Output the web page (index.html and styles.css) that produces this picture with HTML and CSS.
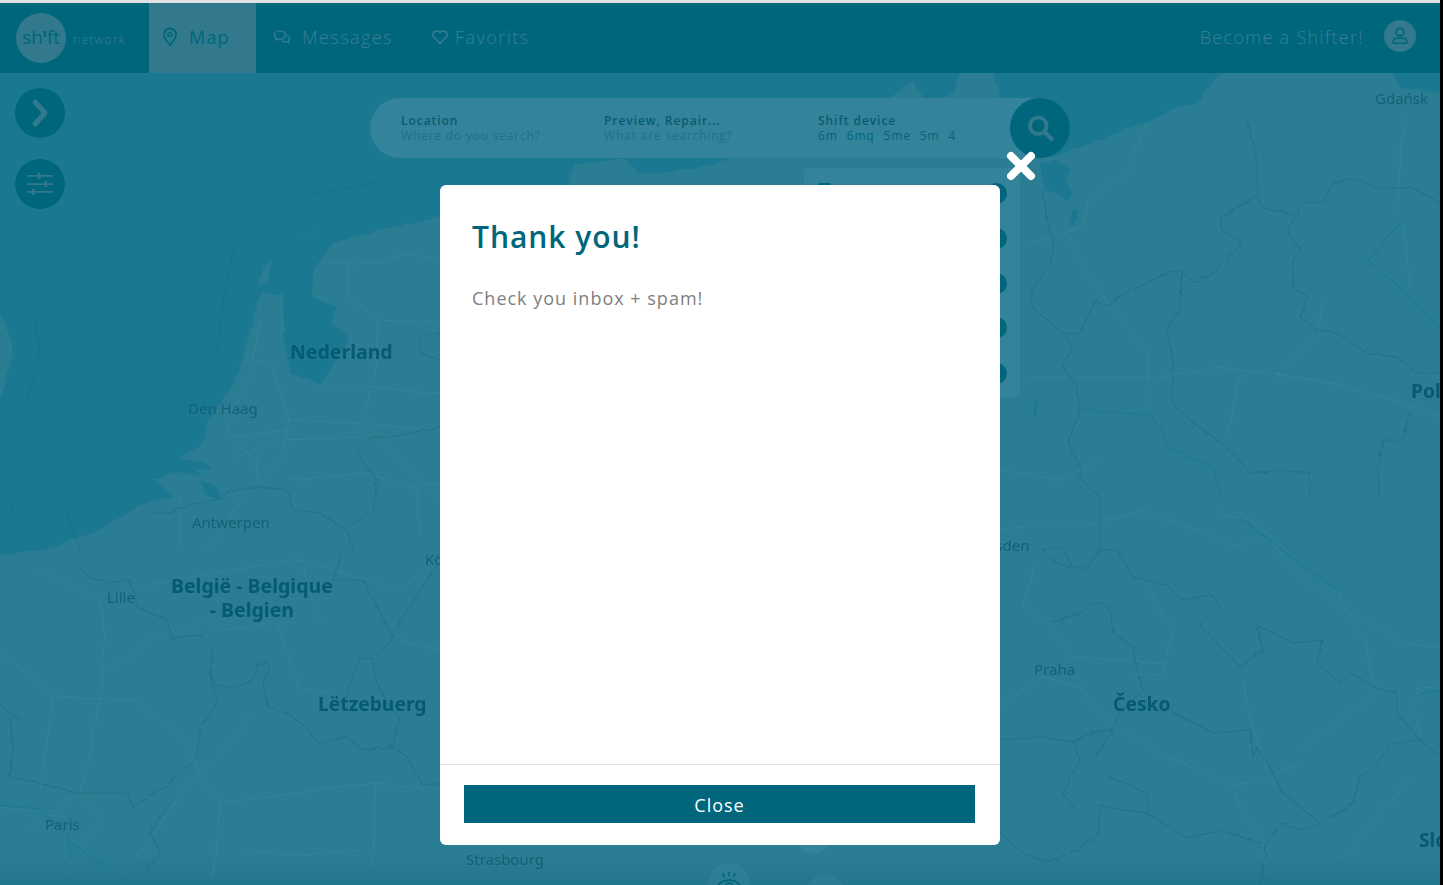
FILE: index.html
```html
<!DOCTYPE html>
<html lang="en">
<head>
<meta charset="utf-8">
<title>Shift network</title>
<link rel="stylesheet" href="styles.css">
</head>
<body>
<div class="app">
  <header class="nav">
    <div class="brand">
      <span class="logo">sh<i class="logo-i">ꞌ</i>ft</span>
      <span class="brand-sub">network</span>
    </div>
    <a class="nav-item item-map">
      <svg class="nav-icon" viewBox="0 0 16 20" width="16" height="20"><path d="M8 1.500a6 6 0 0 0-6 6c0 4 6 10.500 6 10.500s6-6.500 6-10.500a6 6 0 0 0-6-6z" fill="none" stroke="currentColor" stroke-width="1.800"/><circle cx="8" cy="7.500" r="2" fill="none" stroke="currentColor" stroke-width="1.600"/></svg>
      Map
    </a>
    <a class="nav-item item-messages">
      <svg class="nav-icon" viewBox="0 0 18 16" width="18" height="16"><path d="M7 2c-3 0-5.500 1.700-5.500 4 0 1.200.7 2.200 1.700 3L2.500 11l2.500-1c.6.200 1.300.300 2 .300 3 0 5.500-1.800 5.500-4.300S10 2 7 2z" fill="none" stroke="currentColor" stroke-width="1.200"/><path d="M14 6.500c1.500.6 2.500 1.800 2.500 3 0 .9-.4 1.600-1.100 2.200l.6 2-2.300-1c-1.700.5-3.700 0-4.700-1.200" fill="none" stroke="currentColor" stroke-width="1.200"/></svg>
      Messages
    </a>
    <a class="nav-item item-favorits">
      <svg class="nav-icon" viewBox="0 0 18 16" width="18" height="16"><path d="M9 14.500 2.500 8A4 4 0 0 1 8 2.500l1 1 1-1A4 4 0 0 1 15.500 8z" fill="none" stroke="currentColor" stroke-width="1.400" stroke-linejoin="round"/></svg>
      Favorits
    </a>
    <div class="nav-right">
      <a class="become">Become a Shifter!</a>
      <span class="avatar">
        <svg viewBox="0 0 18 18" width="20" height="20"><circle cx="9" cy="5.500" r="3.500" fill="none" stroke="#00667c" stroke-width="1.500"/><path d="M3 15.500v-1.500c0-2 1.500-3 3.500-3h5c2 0 3.500 1 3.500 3v1.500z" fill="none" stroke="#00667c" stroke-width="1.500" stroke-linejoin="round"/></svg>
      </span>
    </div>
  </header>

  <main class="map">
    <svg class="map-art" viewBox="0 0 1440 812" preserveAspectRatio="none">
      <defs>
        <filter id="wiggle" filterUnits="userSpaceOnUse" x="-20" y="50" width="1500" height="860">
          <feTurbulence type="fractalNoise" baseFrequency="0.16" numOctaves="2" seed="4"/>
          <feDisplacementMap in="SourceGraphic" scale="4"/>
        </filter>
        <filter id="soft" filterUnits="userSpaceOnUse" x="-20" y="50" width="1500" height="860">
          <feTurbulence type="fractalNoise" baseFrequency="0.05" numOctaves="2" seed="9"/>
          <feDisplacementMap in="SourceGraphic" scale="4"/>
        </filter>
      </defs>
      <g transform="translate(0,-73)">
        <g filter="url(#soft)">
          <path class="land" d="M-20 556 L43 550 L100 530 L143 503 L175 497 L156 482 L172 472 L205 478 L178 458 L200 448 L207 425 L225 395 L240 370 L250 330 L257 300 L264 293 L283 295 L283 337 L290 373 L320 384 L350 338 L330 322 L337 307 L312 297 L313 270 L333 243 L377 230 L420 222 L445 215 L500 205 L565 195 L575 165 L625 158 L640 175 L690 170 L760 150 L800 125 L880 110 L890 98 L913 80 L925 100 L953 95 L960 70 L993 70 L1000 95 L990 110 L1000 150 L1053 157 L1100 140 L1150 120 L1200 100 L1222 70 L1392 70 L1400 88 L1460 95 L1460 905 L-20 905 Z"/>
          <path class="water" d="M1040 163 L1056 160 L1072 170 L1066 182 L1072 192 L1068 202 L1056 192 L1044 190Z"/>
          <path class="water" d="M1072 210 L1078 210 L1076 226 L1071 226Z"/>
          <path class="water" d="M1035 400 L1038 400 L1037 416 L1034 416Z"/>
          <path class="land" d="M-20 312 L2 315 L12 345 L13 358 L8 375 L2 395 L-20 405Z"/>
          <path class="land" d="M258 282 L265 265 L272 258 L268 280 L262 288Z"/>
          <path class="land" d="M295 243 L312 232 L325 226 L300 240Z"/>
          <path class="land" d="M153 480 L180 472 L210 478 L215 488 L180 495Z"/>
          <path class="water" d="M175 458 L205 462 L212 470 L190 470Z"/>
          <path class="water" d="M200 480 L215 485 L222 500 L205 495Z"/>
        </g>
        <path class="sea-line" d="M0 277 L33 307 L40 353 L23 417 L0 440 M263 220 L233 250 L223 303 L217 353 L193 393 L170 417 L140 443 L122 477 L67 513 L27 525 L0 543 M77 437 L122 477 L147 503 M67 513 L80 550 M0 483 L13 503 L10 520 L20 530 M255 220 L300 195 L340 190 L377 182 L430 165"/>
        <g filter="url(#soft)">
          <path class="road" d="M283 293 L283 333 M260 320 L253 360 L270 363 L290 420 L283 453 L260 480 M253 370 L227 427 L247 453 L260 480 M347 260 L347 293 L377 320 L377 367 L367 407 L357 427 L377 440 L423 483 L440 485 M320 263 L380 263 L407 253 L440 260 M377 320 L440 323 M287 420 L350 423 L440 430 M230 437 L287 430 M233 457 L283 440 L363 437 M313 387 L367 387 L440 393 M290 480 L367 473 L440 497 M180 497 L180 550 M257 453 L257 480 L207 550 M417 487 L420 533
          M103 643 L103 680 L90 757 L80 790 M53 697 L133 700 L187 740 L200 777 L220 803 L267 797 L377 783 L440 790 M107 673 L150 640 L200 620 L227 630 L277 623 L300 690 L333 693 M253 713 L200 777 M220 803 L213 883 M377 783 L370 883 M193 777 L120 883 M0 807 L67 817 M40 570 L100 600 L107 643 M0 650 L53 697 L40 790 M300 560 L320 620 M120 590 L230 570 L300 560 L400 590 L440 560 M400 640 L440 650 M30 830 L80 790 L100 820 L60 880 M240 850 L300 855 L360 850"/>
          <path class="road" d="M1020 377 L1123 377 L1160 378 L1217 367 L1267 373 L1333 383 L1403 403 L1460 423 M1277 377 L1317 337 L1323 303 M1240 377 L1227 440 M1147 347 L1150 413 M1067 237 L1100 293 L1143 347 M1147 120 L1127 173 L1087 200 L1083 227 L1020 247 M1403 220 L1410 287 M1403 120 L1397 213
          M1000 530 L1040 523 L1100 523 L1143 510 L1187 527 L1240 548 L1263 530 M1220 513 L1250 520 L1263 530 L1300 563 L1337 590 L1347 613 L1367 643 L1370 667 L1377 688 M1263 530 L1293 570 L1347 613 L1380 627 L1397 643 L1440 647 M1033 567 L1023 607 L1050 623 L1070 657 L1167 663 M1043 677 L1000 707 M1043 677 L1080 687 L1113 727 L1160 753 L1233 785 L1267 780 L1300 763 M1233 785 L1240 807 L1263 840 L1267 885 M1150 590 L1173 633 L1163 673 L1133 675 M1243 680 L1250 717 L1267 767 M1380 687 L1333 727 L1300 748 M1440 687 L1417 688 L1413 707 L1420 733 M1000 470 L1060 480 L1100 460 M1410 780 L1340 860"/>
          <path class="river" d="M1080 410 L1150 415 L1163 430 L1167 447 L1213 467 L1222 497 M1403 220 L1367 260 L1403 290 L1440 327 M1240 518 L1300 563 L1337 590 M1440 690 L1415 695 M0 805 L40 810 L68 835 L70 860 M68 840 L110 870"/>
        </g>
        <g filter="url(#wiggle)">
          <path class="border" d="M83 570 L90 578 L110 583 L130 580 L137 607 L167 620 L172 638 L200 635 L213 648 L210 673 L217 685 L237 688 L253 680 L257 667 L267 660 L270 667 L263 683 L268 707 L287 713 L305 727 L318 743 L347 737 L363 750 L393 747 L407 757 L422 785 L440 783
          M345 697 L360 658 L372 658 L377 683 L388 705 L400 717 L392 747 M377 657 L393 637 L377 607 L363 580 L333 580 L343 550 M10 777 L40 783 L77 793 L127 793 L133 807 L170 783 L197 757 L200 730 L217 703 L210 673 M170 803 L150 833 L160 853 L147 870 M10 717 L13 750 L10 777
          M150 513 L170 513 L190 505 L217 500 L233 490 L263 487 L287 490 L293 510 L320 513 L347 530 L353 550 M440 333 L420 337 L420 353 L440 360 M393 437 L373 437 L357 453 L377 480 L373 510 L350 527 M440 427 L423 430 L393 437 M0 705 L20 720 M440 560 L395 630"/>
          <path class="border" d="M1042 190 L1050 233 L1055 247 L1050 263 L1032 290 L1032 307 L1063 333 L1072 347 L1063 367 L1077 387 L1080 410 L1068 442 L1080 467 L1080 478 L1100 497 L1100 550 M1247 120 L1257 160 L1257 197 L1263 208 L1297 215 L1302 202 L1323 202 L1333 183 L1353 178 L1377 188 L1413 188 L1440 203 M1257 195 L1220 218 L1222 230 L1242 243 L1213 273 L1193 282 L1180 270 L1167 273 L1147 283 L1127 292 L1107 305 L1095 302 L1080 333 L1065 333 M1297 215 L1287 233 L1300 248 L1293 263 L1293 287 L1308 297 L1300 317 L1317 330 L1337 333 L1367 353 L1397 357 L1417 373 L1440 373 M1182 270 L1180 307 L1167 330 L1173 360 L1172 403 L1193 423 L1213 437 L1233 453 L1250 473 L1283 470 L1310 473 L1310 497 M1380 497 L1377 470 L1383 440 L1403 440 L1410 413
          M1100 550 L1117 550 L1133 577 L1167 585 L1183 600 L1213 595 L1220 607 L1200 625 L1240 667 L1263 650 L1257 625 L1293 643 L1323 640 L1317 663 L1340 683 L1350 673 L1377 688 L1397 693 L1397 713 L1420 740 L1440 757 M1420 740 L1393 743 L1382 757 L1360 777 L1353 803 L1320 823 L1300 830 L1280 823 L1267 843 L1260 885 M1260 843 L1220 830 L1187 838 L1147 813 L1123 810 L1100 805 L1098 835 L1077 850 L1047 862 L1023 853 L1000 833 M1000 740 L1040 737 L1073 742 L1093 732 L1113 730 L1093 760 L1110 777 L1147 793 L1147 813 M1113 633 L1133 647 L1137 667 L1143 690 L1117 717 L1113 730 M1050 623 L1080 613 L1097 602 L1110 607 L1113 633 M1100 550 L1087 568 L1070 568 L1052 560 L1042 550 L1063 547 L1072 568 M1250 730 L1213 733 L1173 713 M1250 730 L1253 757 L1257 748 L1270 767 L1283 793 L1320 823 M1073 742 L1080 760 L1063 793 L1075 810"/>
        </g>
      </g>
    </svg>

    <span class="map-label big nederland">Nederland</span>
    <span class="map-label den-haag">Den Haag</span>
    <span class="map-label antwerpen">Antwerpen</span>
    <span class="map-label big belgie">België - Belgique<br>- Belgien</span>
    <span class="map-label lille">Lille</span>
    <span class="map-label big letzebuerg">Lëtzebuerg</span>
    <span class="map-label paris">Paris</span>
    <span class="map-label strasbourg">Strasbourg</span>
    <span class="map-label koln">Köln</span>
    <span class="map-label gdansk">Gdańsk</span>
    <span class="map-label big polska">Polska</span>
    <span class="map-label dresden">Dresden</span>
    <span class="map-label praha">Praha</span>
    <span class="map-label big cesko">Česko</span>
    <span class="map-label big slovensko">Slovensko</span>

    <button class="round-btn toggle-btn" type="button">
      <svg viewBox="0 0 20 30" width="20" height="30"><path d="M5 4 15 15 5 26" fill="none" stroke="#32798d" stroke-width="5" stroke-linecap="round" stroke-linejoin="round"/></svg>
    </button>
    <button class="round-btn filter-btn" type="button">
      <svg viewBox="0 0 28 24" width="28" height="24" fill="#32798d"><path d="M1 3h26v1.800H1zM1 11.300h26v1.800H1zM1 19h26v1.800H1z"/><path d="M12 .8h2.500v6H12zM18.500 9.200H21v6h-2.500zM6 16.800h2.500v6H6z"/></svg>
    </button>

    <div class="device-panel">
      <i class="panel-glyph"></i>
      <i class="dot"></i><i class="dot"></i><i class="dot"></i><i class="dot"></i><i class="dot"></i>
    </div>

    <div class="search">
      <div class="search-field">
        <strong>Location</strong>
        <span>Where do you search?</span>
      </div>
      <div class="search-field field-service">
        <strong>Preview, Repair...</strong>
        <span>What are searching?</span>
      </div>
      <div class="search-field field-device">
        <strong>Shift device</strong>
        <span class="devices"><b>6m</b><b>6mq</b><b>5me</b><b>5m</b><b>4</b></span>
      </div>
      <button class="search-btn" type="button">
        <svg viewBox="0 0 28 28" width="31" height="31"><circle cx="12" cy="11.500" r="7.500" fill="none" stroke="#32798d" stroke-width="3.500"/><path d="M17.500 17 24 23.500" stroke="#32798d" stroke-width="3.800" stroke-linecap="round"/></svg>
      </button>
    </div>

    <span class="pin pin-a">
      <svg viewBox="0 0 30 20" width="30" height="20"><path d="M2 17c3-5 8-8 13-8s10 3 13 8M15 1v4M9 2l1.500 4M21 2l-1.500 4" fill="none" stroke="#00667c" stroke-width="1.500"/><circle cx="15" cy="16" r="4" fill="none" stroke="#00667c" stroke-width="1.500"/></svg>
    </span>
    <span class="pin pin-b"></span>
    <span class="pin pin-c"></span>

    <div class="shade"></div>

    <section class="modal">
      <div class="modal-body">
        <h1>Thank you!</h1>
        <p>Check you inbox + spam!</p>
      </div>
      <div class="modal-foot">
        <button class="close-btn" type="button">Close</button>
      </div>
      <svg class="modal-x" viewBox="0 0 30 30" width="30" height="30"><path d="M5 5 25 25M25 5 5 25" stroke="#fff" stroke-width="8" stroke-linecap="round"/></svg>
    </section>
  </main>
</div>
</body>
</html>
```
FILE: styles.css
```css
* { box-sizing: border-box; }
html, body { margin: 0; height: 100%; overflow: hidden; }
body { background: #000; font-family: "Open Sans", "Liberation Sans", sans-serif; }

.app {
  width: 1440px;
  height: 885px;
  border-top: 3px solid #dfe3e4;
  display: flex;
  flex-direction: column;
  background: #1a7890;
}

.nav {
  height: 70px;
  flex: none;
  display: flex;
  align-items: stretch;
  background: #00667c;
  color: #3a8094;
  z-index: 3;
}
.brand { width: 149px; display: flex; align-items: center; padding-left: 16px; gap: 7px; }
.logo {
  width: 50px; height: 50px; border-radius: 50%;
  background: #32798d; color: #00667c;
  display: flex; align-items: center; justify-content: center;
  font-size: 19px; font-weight: 400; letter-spacing: -.2px; padding-bottom: 2px;
}
.logo-i { font-style: normal; font-weight: 800; }
.brand-sub { font-size: 12px; font-weight: 300; letter-spacing: 1.300px; color: #3a8094; padding-top: 2px; }
.nav-item {
  display: flex; align-items: center;
  padding-bottom: 2px;
  font-size: 18px; font-weight: 300; letter-spacing: 1.450px;
  color: #3a8094;
}
.item-map { width: 107px; background: #32798d; color: #00667c; padding-left: 13px; gap: 11px; font-weight: 400; letter-spacing: 1.200px; }
.item-messages { padding-left: 17px; padding-right: 38px; gap: 11px; }
.item-favorits { gap: 6px; }
.nav-right { margin-left: auto; display: flex; align-items: center; gap: 20px; padding-right: 24px; padding-bottom: 2px; }
.become { font-size: 18px; font-weight: 300; letter-spacing: 1.300px; color: #3a8094; }
.avatar {
  width: 32px; height: 32px; border-radius: 50%;
  background: #32798d;
  display: flex; align-items: center; justify-content: center;
  margin-bottom: 2px;
}

.map { position: relative; flex: 1; overflow: hidden; }
.map-art { position: absolute; inset: 0; width: 100%; height: 100%; filter: blur(.45px); }
.land { fill: #2b7d92; }
.water { fill: #1a7890; }
.sea-line { fill: none; stroke: #197086; stroke-width: 1; stroke-linejoin: round; opacity: .6; }
.road { fill: none; stroke: #3a8a9e; stroke-width: 1; stroke-linejoin: round; opacity: .6; }
.river { fill: none; stroke: #1f7a92; stroke-width: 1.200; stroke-linejoin: round; }
.border { fill: none; stroke: #1a6a80; stroke-width: 1; stroke-linejoin: round; opacity: .62; }

.map-label {
  position: absolute;
  font-family: "Noto Sans", "Open Sans", sans-serif;
  font-size: 15px;
  color: #136277;
  white-space: nowrap;
  line-height: 20px;
}
.map-label.big { font-size: 19.300px; font-weight: 700; line-height: 24px; color: #065a72; }
.map-label.nederland, .map-label.belgie { font-size: 19.500px; }
.nederland { left: 290px; top: 267px; }
.den-haag { left: 188px; top: 325px; }
.antwerpen { left: 192px; top: 439px; }
.belgie { left: 171px; top: 501px; text-align: center; }
.lille { left: 107px; top: 514px; }
.letzebuerg { left: 318px; top: 619px; }
.paris { left: 45px; top: 741px; }
.strasbourg { left: 466px; top: 776px; }
.koln { left: 425px; top: 476px; }
.gdansk { left: 1375px; top: 15px; }
.polska { left: 1411px; top: 306px; }
.dresden { left: 970px; top: 462px; }
.praha { left: 1034px; top: 586px; }
.cesko { left: 1113px; top: 619px; }
.slovensko { left: 1419px; top: 755px; }

.round-btn, .search-btn {
  position: absolute;
  border: 0; padding: 0; border-radius: 50%;
  background: #00667c;
  display: flex; align-items: center; justify-content: center;
}
.round-btn { left: 15px; width: 50px; height: 50px; }
.toggle-btn { top: 15px; }
.filter-btn { top: 86px; }

.search {
  position: absolute;
  left: 370px; top: 25px;
  width: 700px; height: 60px;
  border-radius: 30px;
  background: #33839a;
  display: flex;
  align-items: center;
  padding-left: 31px;
}
.search-field { display: flex; flex-direction: column; width: 203px; font-size: 12px; line-height: 15px; letter-spacing: .95px; }
.search-field strong { font-weight: 600; color: #085c72; }
.search-field span { color: #1c7389; letter-spacing: .8px; }
.field-service { width: 214px; }
.search-field .devices { display: flex; gap: 9px; color: #00667c; letter-spacing: .85px; }
.devices b { font-weight: 500; }
.search-btn { right: 0; top: 0; width: 60px; height: 60px; }

.device-panel {
  position: absolute;
  left: 804px; top: 95px;
  width: 216px; height: 229px;
  border-radius: 4px;
  background: #33839a;
}
.panel-glyph { position: absolute; left: 14px; top: 15px; width: 13px; height: 13px; border-radius: 2px; background: #00667c; }
.dot { position: absolute; left: 182px; width: 21px; height: 21px; border-radius: 50%; background: #00667c; }
.dot:nth-of-type(2) { top: 15px; }
.dot:nth-of-type(3) { top: 60px; }
.dot:nth-of-type(4) { top: 105px; }
.dot:nth-of-type(5) { top: 149px; }
.dot:nth-of-type(6) { top: 195px; }

.pin { position: absolute; border-radius: 50%; background: #33839a; display: flex; justify-content: center; padding-top: 8px; }
.pin-a { left: 708px; top: 790px; width: 42px; height: 42px; }
.pin-b { left: 805px; top: 802px; width: 40px; height: 40px; }
.pin-c { left: 793px; top: 740px; width: 40px; height: 40px; }

.shade {
  position: absolute; left: 0; right: 0; bottom: 0; height: 28px;
  background: linear-gradient(to bottom, rgba(0, 90, 110, 0), rgba(0, 90, 110, .16));
}

.modal {
  position: absolute;
  left: 440px; top: 112px;
  width: 560px; height: 660px;
  background: #fff;
  border-radius: 6px;
  display: flex;
  flex-direction: column;
}
.modal-body { flex: 1; padding: 32px 32px 0; }
.modal-body h1 { margin: 0; font-size: 30px; line-height: 40px; font-weight: 600; color: #00667c; letter-spacing: .95px; }
.modal-body p { margin: 29px 0 0; font-size: 18px; line-height: 24px; color: #808080; letter-spacing: 1px; }
.modal-foot { height: 81px; flex: none; border-top: 1px solid #e3e3e3; padding: 20px 25px 0 24px; }
.close-btn {
  display: block; width: 100%; height: 38px;
  border: 0; background: #00667c; color: #fff;
  font-family: inherit; font-size: 18px; letter-spacing: 1px; padding-top: 3px;
}
.modal-x { position: absolute; right: -36px; top: -34px; }
```
